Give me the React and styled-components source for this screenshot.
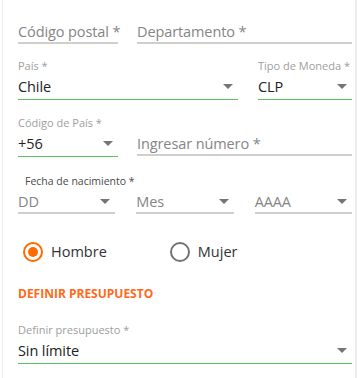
import React from "react";
import styled, { createGlobalStyle } from "styled-components";

const GlobalStyle = createGlobalStyle`
  html, body {
    margin: 0;
    padding: 0;
    background: #ffffff;
  }
  body {
    font-family: "Open Sans", "Noto Sans", sans-serif;
  }
`;

const Page = styled.div`
  width: 357px;
  height: 378px;
  display: flex;
  box-sizing: border-box;
  overflow: hidden;
`;

const Card = styled.div`
  flex: 1;
  margin-left: 2px;
  border-left: 1px solid #ededed;
  padding: 20px 3px 0 15px;
  display: flex;
  flex-direction: column;
`;

const ScrollStrip = styled.div`
  width: 2px;
  background: #ececec;
`;

const Row = styled.div`
  display: flex;
  gap: ${(p) => p.$gap || 19}px;
  margin-top: ${(p) => p.$top || 0}px;
`;

const Field = styled.div`
  width: ${(p) => (p.$width ? `${p.$width}px` : "auto")};
  flex: ${(p) => (p.$width ? "none" : "1 1 0")};
  min-width: 0;
  display: flex;
  flex-direction: column;
`;

const Label = styled.div`
  font-size: ${(p) => (p.$dark ? 10.5 : 11)}px;
  line-height: 14px;
  color: ${(p) => (p.$dark ? "#4a4a4a" : "#9e9e9e")};
  margin-bottom: 2px;
  padding-left: ${(p) => p.$indent || 0}px;
  white-space: nowrap;
`;

const Control = styled.div`
  display: flex;
  align-items: center;
  justify-content: space-between;
  height: 22px;
  font-size: 14.5px;
  letter-spacing: -0.1px;
  color: ${(p) => (p.$filled ? "#222222" : "#858585")};
  padding-bottom: ${(p) => (p.$focused ? 2 : 0)}px;
  border-bottom: ${(p) =>
    p.$focused ? "1px solid #5cc15c" : "2px solid #cfcfcf"};
  white-space: nowrap;
`;

const Caret = styled.span`
  flex: none;
  width: 0;
  height: 0;
  margin-right: 5px;
  border-left: 5px solid transparent;
  border-right: 5px solid transparent;
  border-top: 5px solid #757575;
`;

const RadioGroup = styled.div`
  display: flex;
  align-items: center;
  gap: 63px;
  margin-top: 28px;
  padding-left: 5px;
`;

const RadioOption = styled.label`
  display: flex;
  align-items: center;
  gap: 8px;
  font-size: 14.5px;
  line-height: 20px;
  color: #333333;
`;

const RadioCircle = styled.span`
  width: 20px;
  height: 20px;
  box-sizing: border-box;
  border-radius: 50%;
  border: 2px solid ${(p) => (p.$checked ? "#ff6a00" : "#737373")};
  display: flex;
  align-items: center;
  justify-content: center;

  &::after {
    content: "";
    display: ${(p) => (p.$checked ? "block" : "none")};
    width: 10px;
    height: 10px;
    border-radius: 50%;
    background: #ff6a00;
  }
`;

const SectionTitle = styled.div`
  margin-top: 24px;
  font-size: 12px;
  line-height: 16px;
  font-weight: 700;
  color: #ff6a1a;
`;

function Select({ label, value, placeholder, focused, width, indent, dark }) {
  return (
    <Field $width={width}>
      {label && (
        <Label $indent={indent} $dark={dark}>
          {label}
        </Label>
      )}
      <Control $focused={focused} $filled={!!value}>
        <span>{value || placeholder}</span>
        <Caret />
      </Control>
    </Field>
  );
}

function Input({ label, placeholder, width }) {
  return (
    <Field $width={width}>
      {label && <Label>{label}</Label>}
      <Control>
        <span>{placeholder}</span>
      </Control>
    </Field>
  );
}

export default function App() {
  return (
    <>
      <GlobalStyle />
      <Page>
        <Card>
          <Row>
            <Input placeholder="Código postal *" width={100} />
            <Input placeholder="Departamento *" />
          </Row>

          <Row $top={15} $gap={20}>
            <Select label="País *" value="Chile" focused width={220} />
            <Select label="Tipo de Moneda *" value="CLP" focused />
          </Row>

          <Row $top={16}>
            <Select label="Código de País *" value="+56" focused width={100} />
            <Input label={"\u00a0"} placeholder="Ingresar número *" />
          </Row>

          <Row $top={17} $gap={21}>
            <Select
              label="Fecha de nacimiento *"
              indent={7}
              dark
              placeholder="DD"
            />
            <Select label={"\u00a0"} placeholder="Mes" />
            <Select label={"\u00a0"} placeholder="AAAA" />
          </Row>

          <RadioGroup>
            <RadioOption>
              <RadioCircle $checked />
              Hombre
            </RadioOption>
            <RadioOption>
              <RadioCircle />
              Mujer
            </RadioOption>
          </RadioGroup>

          <SectionTitle>DEFINIR PRESUPUESTO</SectionTitle>

          <Row $top={21}>
            <Select label="Definir presupuesto *" value="Sin límite" focused />
          </Row>
        </Card>
        <ScrollStrip />
      </Page>
    </>
  );
}
